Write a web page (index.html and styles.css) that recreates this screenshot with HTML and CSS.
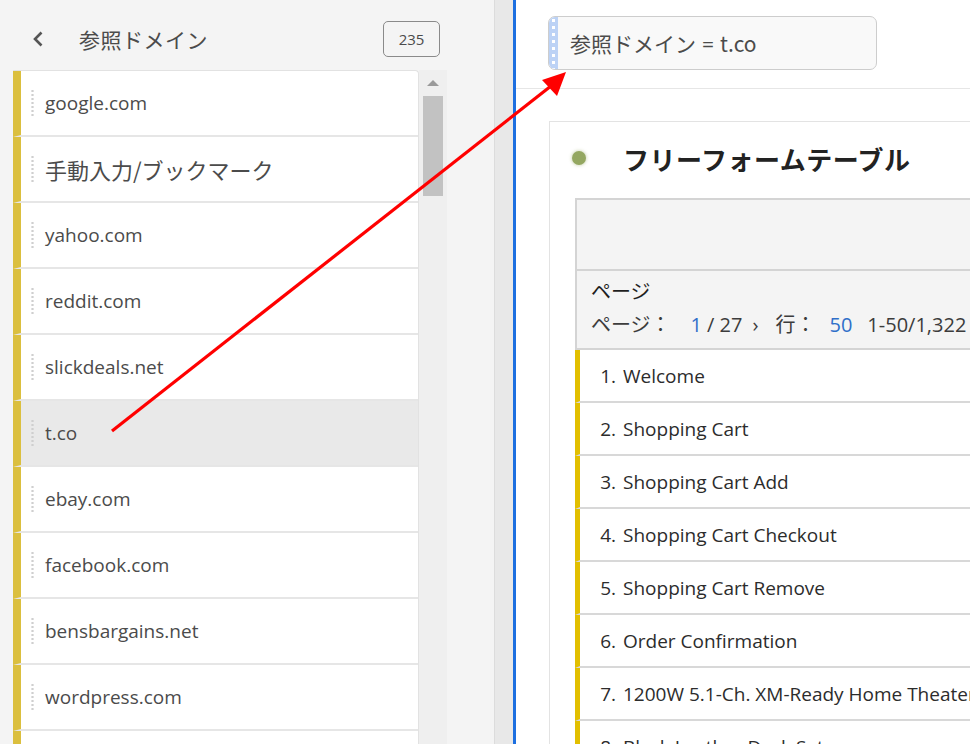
FILE: index.html
```html
<!DOCTYPE html>
<html lang="ja">
<head>
<meta charset="utf-8">
<title>参照ドメイン</title>
<link rel="stylesheet" href="styles.css">
</head>
<body>
<div class="app">
  <aside class="left">
    <header class="lhead">
      <svg class="back" width="12" height="16" viewBox="0 0 12 16"><path d="M9.5 1.5 L3 8 L9.5 14.5" fill="none" stroke="#555" stroke-width="2.6"/></svg>
      <h1 class="ltitle">参照ドメイン</h1>
      <span class="count">235</span>
    </header>
    <div class="lbody">
      <ul class="list">
        <li class="item"><span class="grip"></span><span class="label">google.com</span></li>
        <li class="item"><span class="grip"></span><span class="label ja">手動入力/ブックマーク</span></li>
        <li class="item"><span class="grip"></span><span class="label">yahoo.com</span></li>
        <li class="item"><span class="grip"></span><span class="label">reddit.com</span></li>
        <li class="item"><span class="grip"></span><span class="label">slickdeals.net</span></li>
        <li class="item selected"><span class="grip"></span><span class="label">t.co</span></li>
        <li class="item"><span class="grip"></span><span class="label">ebay.com</span></li>
        <li class="item"><span class="grip"></span><span class="label">facebook.com</span></li>
        <li class="item"><span class="grip"></span><span class="label">bensbargains.net</span></li>
        <li class="item"><span class="grip"></span><span class="label">wordpress.com</span></li>
        <li class="item"><span class="grip"></span><span class="label">bing.com</span></li>
      </ul>
      <div class="scroll"><span class="up"></span><span class="thumb"></span></div>
    </div>
  </aside>
  <div class="gutter"></div>
  <main class="right">
    <div class="filters">
      <div class="pill"><span class="pill-grip"></span><span class="pill-text">参照ドメイン<span class="eq">=</span>t.co</span></div>
    </div>
    <section class="panel">
      <div class="ptitle"><span class="dot"></span><h2>フリーフォームテーブル</h2></div>
      <div class="table">
        <div class="thead"></div>
        <div class="dim">
          <div class="dim-name">ページ</div>
          <div class="pager"><span class="pl">ページ：</span><span class="blue n1">1</span><span class="of">/ 27</span><span class="chev">›</span><span class="pl rows">行：</span><span class="blue n50">50</span><span class="range">1-50/1,322</span></div>
        </div>
        <ol class="rows-list">
          <li class="row"><span class="num">1.</span><span class="name">Welcome</span></li>
          <li class="row"><span class="num">2.</span><span class="name">Shopping Cart</span></li>
          <li class="row"><span class="num">3.</span><span class="name">Shopping Cart Add</span></li>
          <li class="row"><span class="num">4.</span><span class="name">Shopping Cart Checkout</span></li>
          <li class="row"><span class="num">5.</span><span class="name">Shopping Cart Remove</span></li>
          <li class="row"><span class="num">6.</span><span class="name">Order Confirmation</span></li>
          <li class="row"><span class="num">7.</span><span class="name">1200W 5.1-Ch. XM-Ready Home Theater System</span></li>
          <li class="row"><span class="num">8.</span><span class="name">Black Leather Desk Set</span></li>
        </ol>
      </div>
    </section>
  </main>
</div>
<svg class="arrow" width="970" height="744" viewBox="0 0 970 744">
  <line x1="112" y1="431" x2="551" y2="86" stroke="#ff0000" stroke-width="3.2"/>
  <polygon points="566,72 542,80 557,96" fill="#ff0000"/>
</svg>
</body>
</html>
```
FILE: styles.css
```css
* { box-sizing: border-box; }
html, body { margin: 0; padding: 0; }
body {
  width: 970px;
  height: 744px;
  overflow: hidden;
  position: relative;
  font-family: "Open Sans", "Noto Sans CJK JP", sans-serif;
  background: #fff;
}
.app { display: flex; height: 744px; }

/* left rail */
.left { width: 494px; flex: none; background: #f4f4f4; display: flex; flex-direction: column; }
.lhead { height: 70px; display: flex; align-items: center; padding: 8px 54px 0 32px; }
.back { flex: none; }
.ltitle { margin: 0 0 0 35px; font-family: "Noto Sans CJK JP", sans-serif; font-weight: 400; font-size: 21px; color: #4b4b4b; letter-spacing: 0.5px; }
.count { margin-left: auto; width: 57px; height: 36px; border: 1px solid #8a8a8a; border-radius: 5px; display: flex; align-items: center; justify-content: center; font-size: 15px; color: #4b4b4b; }
.lbody { flex: 1; display: flex; padding-left: 13px; min-height: 0; }
.list { list-style: none; margin: 0; padding: 0; width: 406px; background: #fff; border-right: 1px solid #e2e2e2; border-top: 1px solid #e2e2e2; border-radius: 0 4px 0 0; overflow: hidden; }
.item { height: 66px; display: flex; align-items: center; border-left: 8px solid #dbbf3e; border-bottom: 2px solid #e6e6e6; padding-left: 10px; }
.item.selected { background: #e9e9e9; }
.grip { width: 3px; height: 28px; background-image: radial-gradient(circle, #cfcfcf 1px, transparent 1.3px); background-size: 3px 4px; flex: none; }
.label { margin-left: 11px; font-size: 19px; color: #4b4b4b; }
.label.ja { font-family: "Noto Sans CJK JP", sans-serif; font-size: 22px; }
.scroll { width: 28px; background: #efefef; display: flex; flex-direction: column; align-items: center; padding-top: 10px; }
.up { width: 0; height: 0; border-left: 6px solid transparent; border-right: 6px solid transparent; border-bottom: 6px solid #9a9a9a; }
.thumb { margin-top: 10px; width: 20px; height: 100px; background: #c2c2c2; }

.gutter { width: 19px; flex: none; background: #e8e8e8; border-left: 1px solid #dcdcdc; }

/* right workspace */
.right { flex: 1; min-width: 0; border-left: 3px solid #1d6fe0; background: #fff; overflow: hidden; }
.filters { height: 89px; border-bottom: 1px solid #e6e6e6; padding: 16px 0 0 32px; }
.pill { width: 329px; height: 54px; border: 1px solid #cdcdcd; border-radius: 7px; background: #f9f9f9; display: flex; align-items: center; overflow: hidden; }
.pill-grip { align-self: stretch; width: 9px; background-color: #bcd2f5; background-image: radial-gradient(circle, #ffffff 1.6px, transparent 2px); background-size: 9px 7px; background-position: 0 14px; background-repeat: repeat-y; }
.pill-text { margin-left: 12px; font-family: "Noto Sans CJK JP", sans-serif; font-size: 21px; color: #4b4b4b; white-space: nowrap; }
.eq { margin: 0 6px; font-family: "Open Sans", sans-serif; }

.panel { margin: 32px 0 0 33px; width: 640px; border: 1px solid #e3e3e3; border-right: none; }
.ptitle { height: 72px; display: flex; align-items: center; padding-left: 22px; }
.dot { width: 14px; height: 14px; border-radius: 50%; background: #94a761; box-shadow: 0 0 3px 1px rgba(148,167,97,0.35); flex: none; }
.ptitle h2 { margin: 0 0 0 37px; font-family: "Noto Sans CJK JP", sans-serif; font-weight: 700; font-size: 26px; color: #222; letter-spacing: 0.5px; }
.table { margin: 4px 0 0 25px; }
.thead { height: 71px; background: #f4f4f4; border-top: 2px solid #d4d4d4; border-left: 2px solid #d4d4d4; }
.dim { height: 81px; background: #f4f4f4; border-top: 2px solid #d4d4d4; border-left: 2px solid #d4d4d4; border-bottom: 2px solid #d4d4d4; padding: 6px 0 0 14px; }
.dim-name { font-family: "Noto Sans CJK JP", sans-serif; font-size: 20px; color: #1e1e1e; line-height: 28px; }
.pager { margin-top: 5px; display: flex; align-items: baseline; font-size: 20px; color: #3c3c3c; white-space: nowrap; line-height: 28px; }
.pl { font-family: "Noto Sans CJK JP", sans-serif; font-size: 20px; }
.blue { color: #2f6fc9; }
.n1 { margin-left: 20px; }
.of { margin-left: 5px; }
.chev { margin-left: 10px; }
.rows { margin-left: 17px; }
.n50 { margin-left: 14px; }
.range { margin-left: 15px; }
.rows-list { list-style: none; margin: 0; padding: 0; }
.row { height: 53px; display: flex; align-items: center; border-left: 5px solid #e2bf00; border-bottom: 2px solid #d8d8d8; font-size: 19px; color: #2c2c2c; white-space: nowrap; }
.num { width: 36px; text-align: right; flex: none; }
.name { margin-left: 7px; }

.arrow { position: absolute; left: 0; top: 0; pointer-events: none; }
```
